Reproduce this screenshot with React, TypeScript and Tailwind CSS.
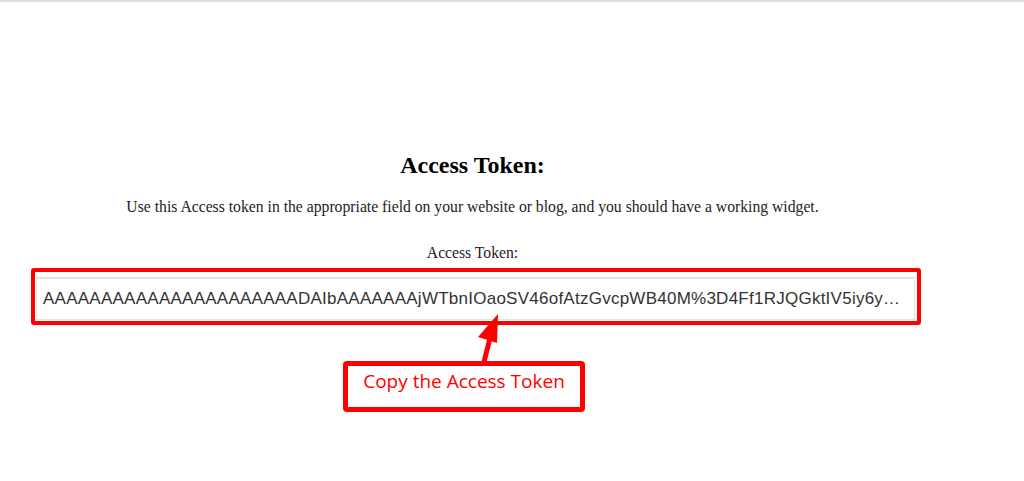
const TOKEN =
  "AAAAAAAAAAAAAAAAAAAAAADAIbAAAAAAAjWTbnIOaoSV46ofAtzGvcpWB40M%3D4Ff1RJQGktIV5iy6y…";

function Arrow() {
  return (
    <svg
      className="pointer-events-none absolute left-0 top-[-2px]"
      width="945"
      height="481"
      viewBox="0 0 945 481"
    >
      <line x1="484" y1="362" x2="491" y2="334" stroke="#ff0000" strokeWidth="5" strokeLinecap="round" />
      <polygon points="498,314 478,337 497,343" fill="#ff0000" />
    </svg>
  );
}

export default function App() {
  return (
    <div className="h-[481px] w-full overflow-hidden bg-white">
      <div className="h-[2px] w-full bg-[#dcdce2]" />
      <div className="relative w-[945px] pt-[149px] text-center" style={{ fontFamily: '"Liberation Serif", serif' }}>
        <h1 className="text-[24px] font-bold leading-[28px] text-black">Access Token:</h1>
        <p className="mt-[18px] text-[15.7px] leading-[20px] text-[#222]">
          Use this Access token in the appropriate field on your website or blog, and you should have a working widget.
        </p>
        <p className="mt-[26px] text-[15.7px] leading-[20px] text-[#222]">Access Token:</p>

        <div className="ml-[31px] mt-[5px] h-[57px] w-[890px] rounded-[3px] border-4 border-[#ff0000] pl-[1px] pr-[2px] pt-[5px]">
          <div
            className="flex h-[43px] items-center overflow-hidden whitespace-nowrap border border-t-2 border-[#e3e3e3] pl-[6px] text-left text-[17px] tracking-[0.25px] text-[#333]"
            style={{ fontFamily: '"Liberation Sans", Arial, sans-serif' }}
          >
            {TOKEN}
          </div>
        </div>

        <div className="ml-[343px] mt-[36px] flex h-[51px] w-[242px] justify-center rounded-[4px] border-[5px] border-[#ff0000] pt-[2px]">
          <span
            className="text-[19px] leading-[26px] text-[#ff0000]"
            style={{ fontFamily: '"Open Sans", sans-serif' }}
          >
            Copy the Access Token
          </span>
        </div>

        <Arrow />
      </div>
    </div>
  );
}
